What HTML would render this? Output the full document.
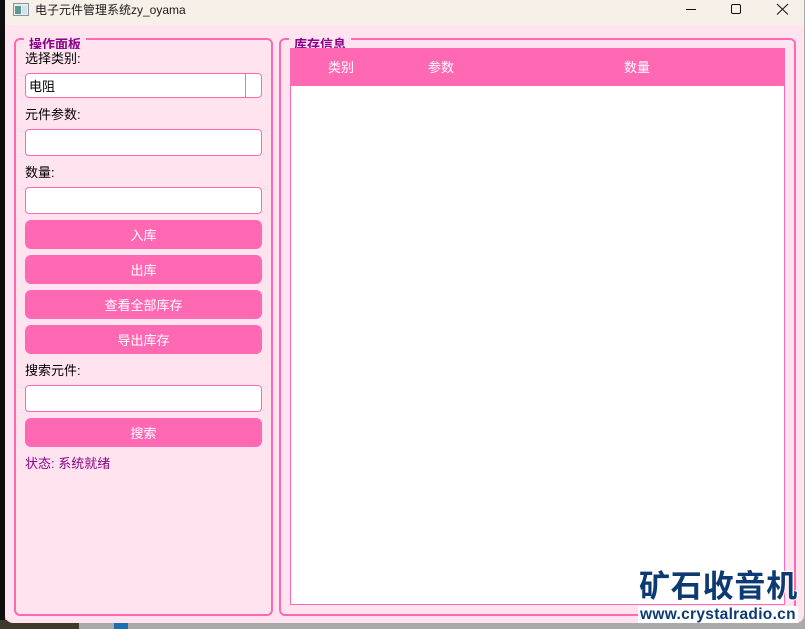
<!DOCTYPE html>
<html><head><meta charset="utf-8">
<style>
html,body{margin:0;padding:0;width:805px;height:629px;overflow:hidden;background:#aaa;}
body{position:relative;font-family:"Liberation Sans","Microsoft YaHei","WenQuanYi Zen Hei","Noto Sans CJK SC",sans-serif;font-size:13px;}
div{position:absolute;box-sizing:border-box;white-space:nowrap;}
.in{left:25px;width:237px;background:#fff;border:1px solid #ff69b4;border-radius:4px;}
.btn{left:25px;width:237px;height:29px;background:#ff69b4;border-radius:6px;color:#fff;text-align:center;line-height:31px;}
.lb{left:25px;color:#000;line-height:16px;}
.gb{border:2px solid #ff69b4;border-radius:6px;top:38px;height:578px;}
.tt{color:#8b008b;font-weight:bold;line-height:16px;}
.th{color:#fff;top:48px;height:38px;line-height:40px;text-align:center;}
</style></head>
<body>
<div style="left:0;top:0;width:5px;height:629px;background:#0e0e0e"></div>
<div style="left:0;top:620px;width:79px;height:9px;background:#3d3a2c"></div>
<div style="left:114px;top:623px;width:14px;height:6px;background:#1a6fb0"></div>
<div style="left:5px;top:0;width:799px;height:623px;background:#ffe4f0;border-radius:0 0 8px 8px;overflow:hidden">
  <div style="left:0;top:0;width:799px;height:25px;background:#f7f0e8"></div>
</div>
<!-- title bar -->
<svg style="position:absolute;left:13px;top:3px" width="16" height="13"><rect x=".5" y=".5" width="15" height="12" fill="#e8eef0" stroke="#8a949c"/><rect x="2" y="3" width="6" height="8" fill="#5f9a92"/><rect x="9" y="3" width="5" height="8" fill="#cfe3ea"/></svg>
<div style="left:35px;top:2px;line-height:16px;font-size:12px;color:#1a1a1a">电子元件管理系统zy_oyama</div>
<svg style="position:absolute;left:680px;top:0" width="125" height="20" fill="none" stroke="#111" stroke-width="1">
<path d="M6 9.5H16"/><rect x="51.5" y="4.5" width="9" height="9" rx="1.5"/><path d="M97 4L108 14.5M108 4L97 14.5"/></svg>
<!-- left group -->
<div class="gb" style="left:14px;width:259px"></div>
<div style="left:24px;top:36px;width:62px;height:12px;background:#ffe4f0"></div>
<div style="left:29px;top:37px;width:60px;height:12px;overflow:hidden"><div class="tt" style="left:0;top:0">操作面板</div></div>
<div class="lb" style="top:51px">选择类别:</div>
<div class="in" style="top:73px;height:25px"></div>
<div style="left:245px;top:73px;width:1px;height:25px;background:#ff69b4"></div>
<div style="left:29px;top:79px;line-height:16px;color:#000">电阻</div>
<div class="lb" style="top:107px">元件参数:</div>
<div class="in" style="top:129px;height:27px"></div>
<div class="lb" style="top:165px">数量:</div>
<div class="in" style="top:187px;height:27px"></div>
<div class="btn" style="top:220px">入库</div>
<div class="btn" style="top:255px">出库</div>
<div class="btn" style="top:290px">查看全部库存</div>
<div class="btn" style="top:325px">导出库存</div>
<div class="lb" style="top:363px">搜索元件:</div>
<div class="in" style="top:385px;height:27px"></div>
<div class="btn" style="top:418px">搜索</div>
<div class="lb" style="top:456px;color:#8b008b">状态: 系统就绪</div>
<!-- right group -->
<div class="gb" style="left:279px;width:517px"></div>
<div style="left:289px;top:36px;width:62px;height:12px;background:#ffe4f0"></div>
<div style="left:294px;top:37px;width:60px;height:11px;overflow:hidden"><div class="tt" style="left:0;top:0">库存信息</div></div>
<div style="left:290px;top:48px;width:495px;height:557px;background:#fff;border:1px solid #ff69b4"></div>
<div style="left:290px;top:48px;width:495px;height:38px;background:#ff69b4"></div>
<div class="th" style="left:291px;width:100px">类别</div>
<div class="th" style="left:391px;width:100px">参数</div>
<div class="th" style="left:491px;width:292px">数量</div>
<!-- watermark -->
<div style="left:639px;top:570px;width:160px;height:34px;line-height:34px;font-size:31px;font-weight:bold;color:#0d3a73;letter-spacing:.8px;text-shadow:0 0 1px #fff,1px 0 1px #fff,-1px 0 1px #fff,0 1px 1px #fff,0 -1px 1px #fff">矿石收音机</div>
<div style="left:638px;top:606px;width:160px;height:17px;background:#fff"></div>
<div style="left:640px;top:606px;line-height:18px;font-size:15.5px;font-weight:bold;color:#0d3a73;letter-spacing:.3px">www.crystalradio.cn</div>
</body></html>
